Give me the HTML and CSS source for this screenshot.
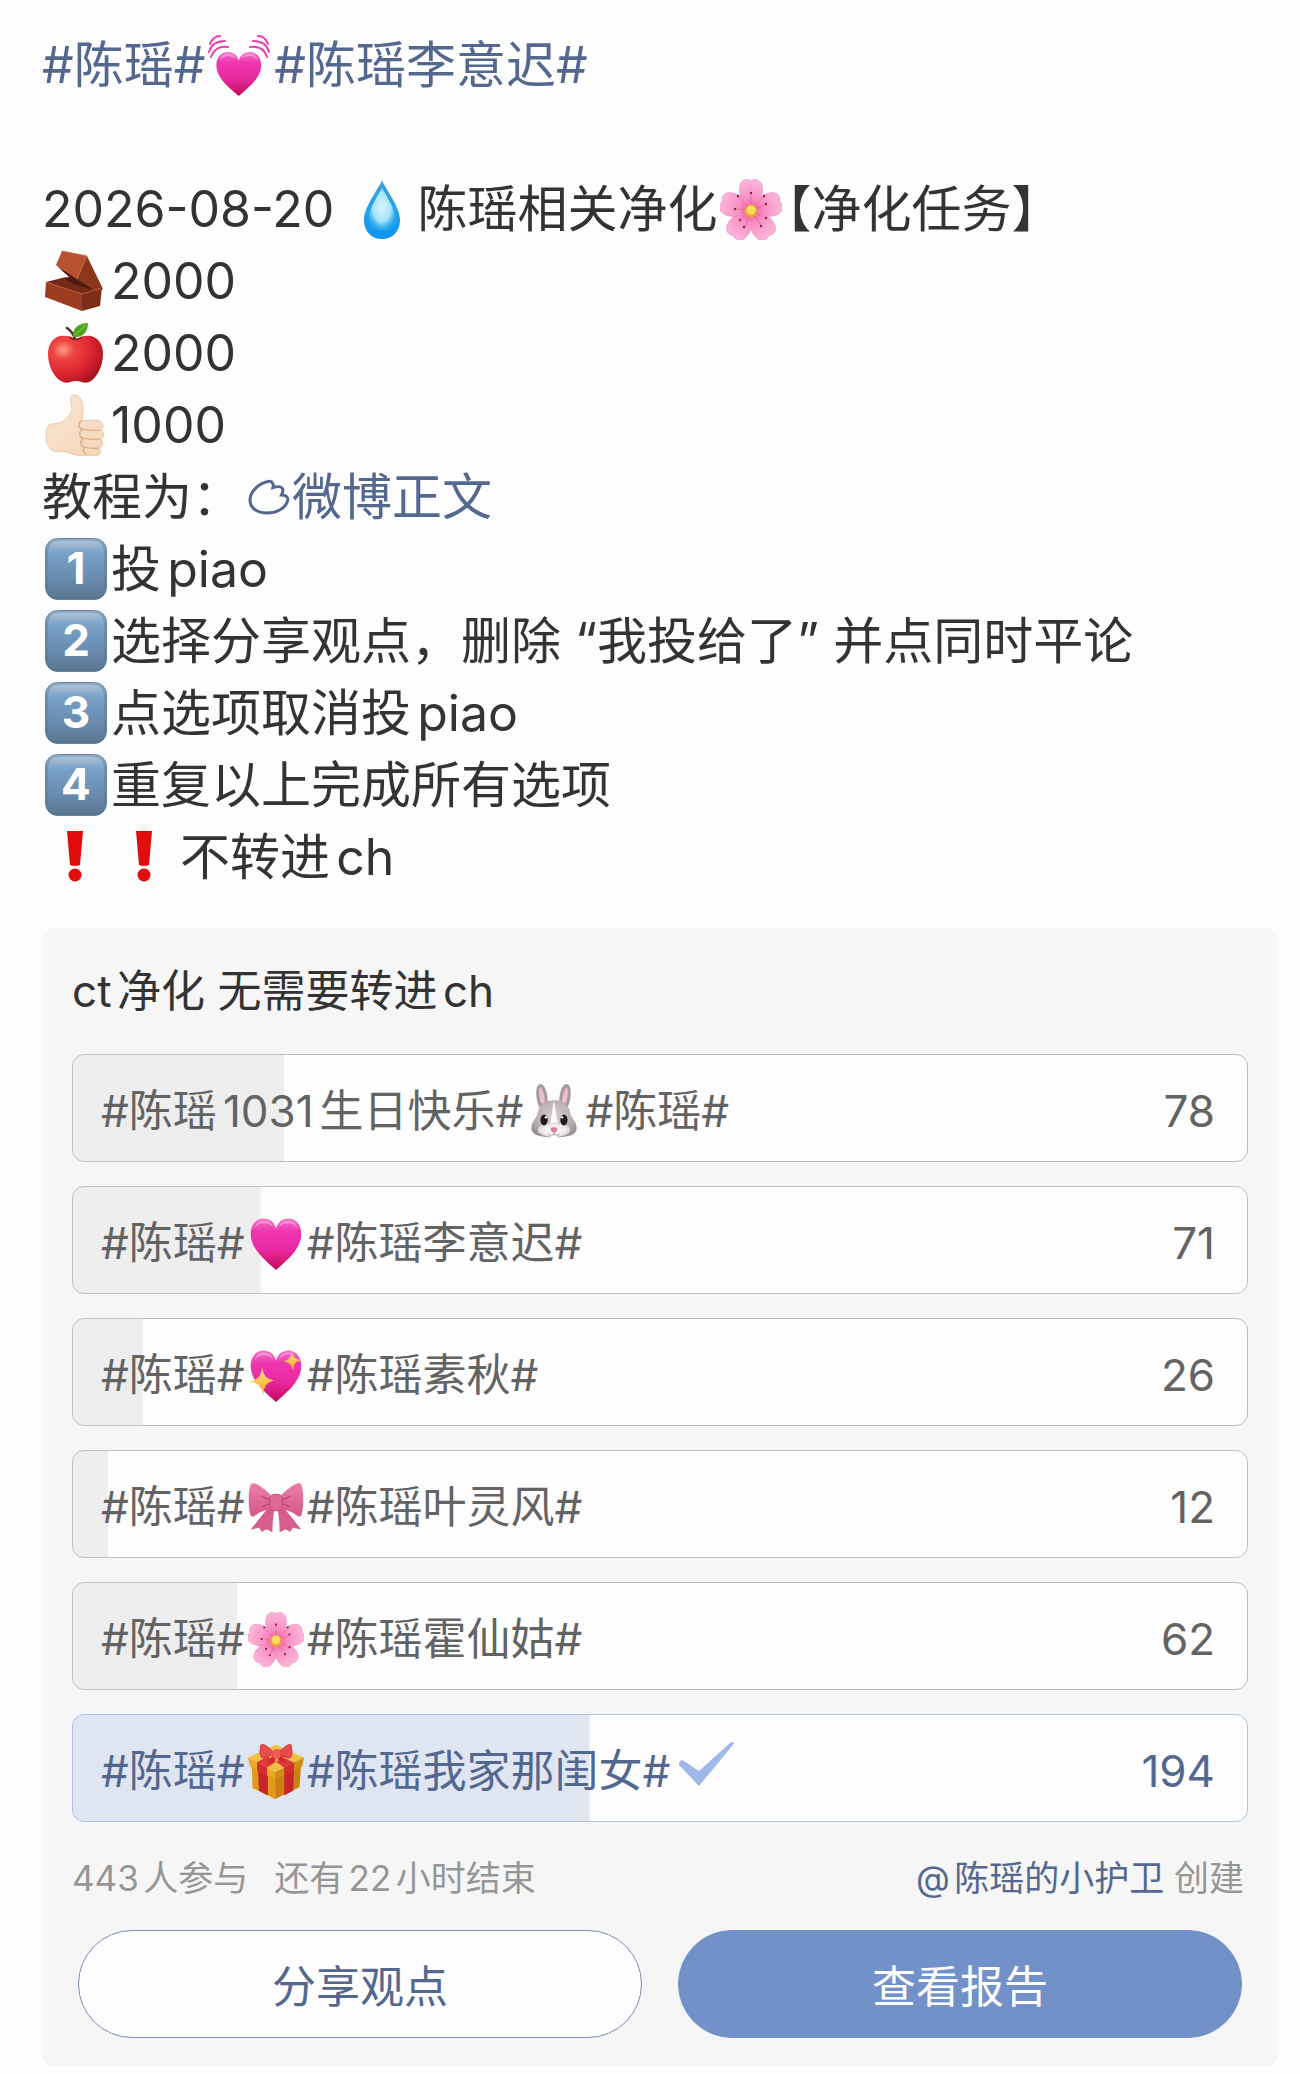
FILE: index.html
```html
<!DOCTYPE html>
<html lang="zh-CN">
<head>
<meta charset="UTF-8" />
<meta name="viewport" content="width=device-width, initial-scale=1" />
<title>微博投票</title>
<link rel="stylesheet" href="styles.css">
</head>
<body>

<!-- emoji -->
<svg class="sprite" width="0" height="0" aria-hidden="true">
  <defs>
    <linearGradient id="g-heart" x1="0" y1="0" x2="0" y2="1">
      <stop offset="0" stop-color="#f673c8" />
      <stop offset="0.25" stop-color="#ee35b0" />
      <stop offset="0.6" stop-color="#e92aa0" />
      <stop offset="1" stop-color="#c30a5c" />
    </linearGradient>
    <linearGradient id="g-drop" x1="0" y1="0" x2="0" y2="1">
      <stop offset="0" stop-color="#3f9fd0" />
      <stop offset="0.5" stop-color="#22a4ea" />
      <stop offset="1" stop-color="#0d93ee" />
    </linearGradient>
    <radialGradient id="g-shine" cx="0.5" cy="0.45" r="0.55">
      <stop offset="0" stop-color="#d8f6fe" />
      <stop offset="0.6" stop-color="#a6e4fb" />
      <stop offset="1" stop-color="#4fbdf3" stop-opacity="0.2" />
    </radialGradient>
    <radialGradient id="g-apple" cx="0.28" cy="0.3" r="0.8">
      <stop offset="0" stop-color="#ff9a88" />
      <stop offset="0.25" stop-color="#ee4440" />
      <stop offset="0.65" stop-color="#dd2430" />
      <stop offset="1" stop-color="#a3141f" />
    </radialGradient>
    <radialGradient id="g-petal" gradientUnits="userSpaceOnUse" cx="31" cy="33" r="32">
      <stop offset="0" stop-color="#ea4f90" />
      <stop offset="0.4" stop-color="#f88fc4" />
      <stop offset="1" stop-color="#fdb8dc" />
    </radialGradient>
    <linearGradient id="g-key" x1="0" y1="0" x2="0" y2="1">
      <stop offset="0" stop-color="#b4cadf" />
      <stop offset="0.25" stop-color="#789fc6" />
      <stop offset="0.6" stop-color="#6b8fb3" />
      <stop offset="1" stop-color="#5a7590" />
    </linearGradient>
    <linearGradient id="g-skin" x1="0" y1="0" x2="1" y2="1">
      <stop offset="0" stop-color="#fbe6d3" />
      <stop offset="1" stop-color="#f4d5b8" />
    </linearGradient>
    <radialGradient id="g-fur" cx="0.5" cy="0.45" r="0.6">
      <stop offset="0" stop-color="#d9cfd3" />
      <stop offset="0.7" stop-color="#b9aeb3" />
      <stop offset="1" stop-color="#978c92" />
    </radialGradient>
    <radialGradient id="g-muzzle" cx="0.5" cy="0.5" r="0.6">
      <stop offset="0" stop-color="#fff" />
      <stop offset="0.6" stop-color="#efe9ec" />
      <stop offset="1" stop-color="#c9bfc4" />
    </radialGradient>
    <linearGradient id="g-bow" x1="0" y1="0" x2="0" y2="1">
      <stop offset="0" stop-color="#ea7fa8" />
      <stop offset="1" stop-color="#d4578a" />
    </linearGradient>
    <linearGradient id="g-star" x1="0" y1="0" x2="0" y2="1">
      <stop offset="0" stop-color="#ffe37a" />
      <stop offset="1" stop-color="#f8a82c" />
    </linearGradient>
  </defs>

  <symbol id="heart" viewBox="0 0 62 62">
    <path fill="url(#g-heart)" d="M31 61C20 51 3 38 3 21 3 11 9 4 17 4c7 0 12 4 14 11C33 8 38 4 45 4c8 0 14 7 14 17 0 17-17 30-28 40z" />
    <path fill="#fbb3e2" opacity="0.6" d="M7 15C9 9 12 6 17 6s9 2 11 7c-4-3-7-4-11-4s-7 2-10 6zM34 13c2-5 6-7 11-7s8 3 10 9c-3-4-6-6-10-6s-7 1-11 4z" />
  </symbol>

  <symbol id="beating" viewBox="0 0 62 62">
    <g transform="translate(6 15) scale(0.8 0.77)">
      <path fill="url(#g-heart)" d="M31 61C20 51 3 38 3 21 3 11 9 4 17 4c7 0 12 4 14 11C33 8 38 4 45 4c8 0 14 7 14 17 0 17-17 30-28 40z" />
      <path fill="#fbb3e2" opacity="0.6" d="M7 15C9 9 12 6 17 6s9 2 11 7c-4-3-7-4-11-4s-7 2-10 6zM34 13c2-5 6-7 11-7s8 3 10 9c-3-4-6-6-10-6s-7 1-11 4z" />
    </g>
    <g fill="none" stroke="#ee3cae" stroke-width="2" stroke-linecap="round">
      <path d="M2 10q3-8 10-8M1 18q3-11 16-11M3 23Q7 11 20 13" />
      <path d="M60 10q-3-8-10-8M61 18q-3-11-16-11M59 23Q55 11 42 13" />
    </g>
  </symbol>

  <symbol id="sparkling" viewBox="0 0 62 62">
    <path fill="url(#g-heart)" d="M31 61C20 51 3 38 3 21 3 11 9 4 17 4c7 0 12 4 14 11C33 8 38 4 45 4c8 0 14 7 14 17 0 17-17 30-28 40z" />
    <path fill="#fbb3e2" opacity="0.6" d="M7 15C9 9 12 6 17 6s9 2 11 7c-4-3-7-4-11-4s-7 2-10 6zM34 13c2-5 6-7 11-7 3 0 5 1 7 3-3-1-4-1-7-1-4 0-7 2-11 5z" />
    <path fill="url(#g-star)" d="M16 23c1 9 4 12 13 14-9 2-11 6-12 16-2-9-5-13-15-15 10-2 12-6 14-15z" />
    <path fill="url(#g-star)" d="M48 4c1 7 4 9 11 11-7 1-8 4-9 11-2-6-4-9-10-10 6-2 8-5 8-12z" />
  </symbol>

  <symbol id="drop" viewBox="0 0 62 62">
    <path fill="url(#g-drop)" d="M31 2c2 7 18 26 18 40 0 12-8 19-18 19s-18-7-18-19C13 28 29 9 31 2z" />
    <path fill="url(#g-shine)" d="M31 9c3 8 14 22 14 33 0 7-6 11-14 11s-14-4-14-11C17 31 28 17 31 9z" />
  </symbol>

  <symbol id="flower" viewBox="0 0 62 62">
    <g fill="url(#g-petal)" stroke="#ee8cbb" stroke-width="0.7">
      <path id="petal" d="M31 34C22 27 18 15 20 8c1-6 7-8 11-5 4-3 10-1 11 5 2 7-2 19-11 26z" />
      <use href="#petal" transform="rotate(72 31 33)" />
      <use href="#petal" transform="rotate(144 31 33)" />
      <use href="#petal" transform="rotate(216 31 33)" />
      <use href="#petal" transform="rotate(288 31 33)" />
    </g>
    <g stroke="#e0669a" stroke-width="0.7" fill="#8c1f4c">
      <path d="M31 32V16M31 32L18 19M31 32l13-13M31 32l-15-1M31 32l15-5M31 32L20 42M31 32l10 15M31 32l-6 17M31 32l15 9" />
      <g stroke="none">
        <circle cx="31" cy="15" r="1.2" /><circle cx="18" cy="18" r="1.2" />
        <circle cx="44" cy="18" r="1.2" /><circle cx="15" cy="31" r="1.2" />
        <circle cx="46" cy="26" r="1.2" /><circle cx="20" cy="42" r="1.2" />
        <circle cx="41" cy="48" r="1.2" /><circle cx="24" cy="49" r="1.2" />
        <circle cx="46" cy="40" r="1.2" />
      </g>
    </g>
    <circle cx="31" cy="33" r="6.5" fill="#f0a23c" />
    <circle cx="31" cy="32" r="4.5" fill="#fbdc62" />
  </symbol>

  <symbol id="brick" viewBox="0 0 62 62">
    <path fill="#742a16" d="M1 32l20-5 36 11-20 7z" />
    <path fill="#9a3d20" d="M1 32l36 12v17L0 47z" />
    <path fill="#7c2d18" d="M37 44l20-7-2 19-18 5z" />
    <path fill="#4f1b0f" d="M11 15l20 13 21 13-24-7-8-5 4-2z" />
    <path fill="#8c361c" d="M42 6l16 33-6 3-20-13z" />
    <path fill="#b8512f" d="M17 1l25 5-10 23-21-14z" />
    <path fill="none" stroke="#c46745" stroke-width="0.8" d="M1 32l36 12 19-6M17 1l25 5-10 23" />
  </symbol>

  <symbol id="apple" viewBox="0 0 62 62">
    <path fill="url(#g-apple)" d="M31 17c5-3 10-4 15-3 8 2 12 9 12 18 0 13-7 25-14 28-5 2-8-1-13-1s-8 3-13 1C10 57 3 45 3 32c0-9 4-16 12-18 5-1 11 0 16 3z" />
    <path fill="none" stroke="#8f1a1a" stroke-width="1.5" d="M24 15q7 5 13 0" />
    <path fill="none" stroke="#59312b" stroke-width="2.6" stroke-linecap="round" d="M22 6q6 4 8 11" />
    <path fill="#4fa51d" d="M28 15C27 6 34 1 43 1c0 8-4 15-15 14z" />
    <path fill="none" stroke="#86cd46" stroke-width="1" d="M30 13L41 3" />
  </symbol>

  <symbol id="thumb" viewBox="0 0 62 62">
    <path fill="url(#g-skin)" stroke="#e6c09c" stroke-width="0.8" d="M3 32c3-4 10-1 14-4 5-4 9-8 10-13 0-5-4-13 1-14 8-1 10 8 10 14 0 4-1 7-1 12l14-1c8 0 9 9 4 10 5 1 5 9 0 9 4 2 3 8-1 9 3 3 1 8-4 8-11 0-20 0-28-4-5-2-9 1-14-1C0 54 0 37 3 32z" />
    <g fill="none" stroke="#d9a980" stroke-width="1.2" stroke-linecap="round">
      <path d="M37 27c-4 1-4 7 0 8q8 2 18 1M37 36c-3 1-3 8 1 8q8 2 17 1M38 45c-3 1-3 7 1 8q7 2 15 1M39 54q-2 4 2 6" />
    </g>
  </symbol>

  <symbol id="bang" viewBox="0 0 62 62">
    <path fill="#e30c0c" d="M22 5h16l-3 34q-5 2-10 0z" />
    <circle cx="30" cy="49" r="6.5" fill="#e30c0c" />
  </symbol>

  <symbol id="rabbit" viewBox="0 0 62 62">
    <path fill="#a79ba1" d="M15 27C10 17 10 1 16 1s9 14 8 24zM46 27c5-10 5-26-1-26s-9 14-8 24z" />
    <path fill="#eebfc7" d="M17 23C14 15 14 5 16 5s5 9 5 17zM44 23c3-8 3-18 1-18s-5 9-5 17z" />
    <path fill="url(#g-fur)" d="M31 19c10 0 17 6 18 14 1 6 7 9 7 17 0 7-8 10-25 10S6 57 6 50c0-8 6-11 7-17 1-8 8-14 18-14z" />
    <path fill="#fbfafb" d="M31 20c2 7 2 18 5 27H26c3-9 3-20 5-27z" />
    <ellipse cx="31" cy="52" rx="18" ry="8" fill="url(#g-muzzle)" />
    <path fill="#fff" d="M27 57h8l-1 5h-6z" />
    <ellipse cx="20" cy="41" rx="4" ry="6" fill="#1f1a1c" />
    <ellipse cx="42" cy="41" rx="4" ry="6" fill="#1f1a1c" />
    <circle cx="22" cy="38" r="1.3" fill="#fff" />
    <circle cx="40" cy="38" r="1.3" fill="#fff" />
    <path fill="#d87d92" d="M27 50q4-2 8 0-1 5-4 5t-4-5z" />
    <path fill="none" stroke="#a6979c" stroke-width="1" d="M31 55v2q-3 2-6 0M31 57q3 2 6 0" />
  </symbol>

  <symbol id="bow" viewBox="0 0 62 62">
    <path fill="#d85d8f" d="M24 30L14 42 3 56l9-2 4 5c1-2 3-3 5-3l6 3c0-10 1-18 2-25zM38 30l10 12 11 14-9-2-4 5c-1-2-3-3-5-3l-6 3c0-10-1-18-2-25z" />
    <path fill="url(#g-bow)" d="M26 19C18 10 8 3 4 5 0 8 0 33 3 40c2 3 4 1 7-1 5-4 12-4 16-8zM36 19C44 10 54 3 58 5c4 3 4 28 1 35-2 3-4 1-7-1-5-4-12-4-16-8z" />
    <path fill="none" stroke="#bd3f74" stroke-width="1.2" d="M25 23q-6-1-10-4M25 28q-6 0-9 3M37 23q6-1 10-4M37 28q6 0 9 3" />
    <rect x="24" y="17" width="14" height="18" rx="5" fill="#df6796" stroke="#bf4577" />
  </symbol>

  <symbol id="gift" viewBox="0 0 62 62">
    <path fill="#e19a1d" d="M4 22l26 14v26L5 50z" />
    <path fill="#c9820f" d="M59 22L30 36v26l27-13z" />
    <path fill="#c9242a" d="M11 28l11 6v24l-10-5zM40 33l11-6-1 26-10 5z" />
    <path fill="#f3c043" d="M31 2l31 14-32 16L0 16z" />
    <path fill="#eba923" d="M0 16l30 16v8L2 26z" />
    <path fill="#d18d16" d="M62 16L30 32v8l30-14z" />
    <path fill="#d32c30" d="M10 21l11 6v9l-11-6zM40 27l11-5v8l-11 6z" />
    <path fill="#e03b3b" d="M10 21l28-14 9 4-26 16zM51 22L22 7l-6 4 24 16z" />
    <path fill="#ea4b4b" stroke="#b51f25" stroke-width="0.8" d="M29 12C24 4 15-1 14 3c-1 6-1 10 1 13 3 2 9-2 14-4zM34 12c5-8 13-13 14-9 1 6 1 10-1 13-3 2-8-2-13-4z" />
    <path fill="#d5282e" d="M28 12l-7 11 8-2 3-6 3 6 8 1-8-10z" />
    <rect x="27" y="7" width="9" height="10" rx="3" fill="#f05a57" />
  </symbol>

  <symbol id="key" viewBox="0 0 62 62">
    <rect x="0.500" y="0.500" width="61" height="61" rx="12" fill="url(#g-key)" stroke="#64829f" />
    <rect x="2" y="2" width="58" height="58" rx="11" fill="none" stroke="#55728e" stroke-opacity="0.35" stroke-width="2" />
  </symbol>
</svg>

<main class="post">
  <div class="post-text">
    <p class="tags"><a href="#">#陈瑶#<svg class="emoji" role="img" aria-label="💓"><use href="#beating" /></svg>#陈瑶李意迟#</a></p>
    <p><br></p>
    <p>2026-08-20 <svg class="emoji" role="img" aria-label="💧"><use href="#drop" /></svg>陈瑶相关净化<svg class="emoji" role="img" aria-label="🌸"><use href="#flower" /></svg><span class="half">【</span>净化任务<span class="half">】</span></p>
    <p><svg class="emoji" role="img" aria-label="🧱"><use href="#brick" /></svg>2000</p>
    <p><svg class="emoji" role="img" aria-label="🍎"><use href="#apple" /></svg>2000</p>
    <p><svg class="emoji" role="img" aria-label="👍🏻"><use href="#thumb" /></svg>1000</p>
    <p>教程为：<a href="#"><svg class="weibo-icon" viewBox="0 0 42 36" aria-hidden="true"><path d="M20 2.500C24 1.500 26 5 25 8.500c3-1 8-1.500 9.500 1 1 2 0 4.500-1 6.500 5 0 7 2.500 6 6C37 30 28 34 19 34 9 34 2 29 2 21 2 12 12 4 20 2.500z" /></svg>微博正文</a></p>
    <p><svg class="emoji" viewBox="0 0 62 62"><use href="#key" /><text class="key-num" x="31" y="46">1</text></svg>投piao</p>
    <p><svg class="emoji" viewBox="0 0 62 62"><use href="#key" /><text class="key-num" x="31" y="46">2</text></svg>选择分享观点，删除 “我投给了” 并点同时平论</p>
    <p><svg class="emoji" viewBox="0 0 62 62"><use href="#key" /><text class="key-num" x="31" y="46">3</text></svg>点选项取消投piao</p>
    <p><svg class="emoji" viewBox="0 0 62 62"><use href="#key" /><text class="key-num" x="31" y="46">4</text></svg>重复以上完成所有选项</p>
    <p><svg class="emoji" role="img" aria-label="❗"><use href="#bang" /></svg><svg class="emoji" role="img" aria-label="❗"><use href="#bang" /></svg>不转进ch</p>
  </div>

  <section class="poll">
    <h2>ct净化 无需要转进ch</h2>

    <div class="options">
      <button type="button" class="option" style="--share: 18%">
        <span class="tags">#陈瑶<span class="num">1031</span>生日快乐#<svg class="emoji" role="img" aria-label="🐰"><use href="#rabbit" /></svg>#陈瑶#</span>
        <span class="votes">78</span>
      </button>
      <button type="button" class="option" style="--share: 16%">
        <span class="tags">#陈瑶#<svg class="emoji" role="img" aria-label="🩷"><use href="#heart" /></svg>#陈瑶李意迟#</span>
        <span class="votes">71</span>
      </button>
      <button type="button" class="option" style="--share: 6%">
        <span class="tags">#陈瑶#<svg class="emoji" role="img" aria-label="💖"><use href="#sparkling" /></svg>#陈瑶素秋#</span>
        <span class="votes">26</span>
      </button>
      <button type="button" class="option" style="--share: 3%">
        <span class="tags">#陈瑶#<svg class="emoji" role="img" aria-label="🎀"><use href="#bow" /></svg>#陈瑶叶灵风#</span>
        <span class="votes">12</span>
      </button>
      <button type="button" class="option" style="--share: 14%">
        <span class="tags">#陈瑶#<svg class="emoji" role="img" aria-label="🌸"><use href="#flower" /></svg>#陈瑶霍仙姑#</span>
        <span class="votes">62</span>
      </button>
      <button type="button" class="option selected" style="--share: 44%">
        <span class="tags">#陈瑶#<svg class="emoji" role="img" aria-label="🎁"><use href="#gift" /></svg>#陈瑶我家那闺女#<svg class="check" viewBox="0 0 56 46" aria-hidden="true"><path d="M1 22q1-4 5-2l15 10L52 2q3-2 4 0-1 2-2 3L21 45 1 24z" /></svg></span>
        <span class="votes">194</span>
      </button>
    </div>

    <div class="meta">
      <div class="stats"><span>443人参与</span><span>还有22小时结束</span></div>
      <div><a href="#">@陈瑶的小护卫</a> 创建</div>
    </div>

    <div class="actions">
      <button type="button" class="btn">分享观点</button>
      <button type="button" class="btn primary">查看报告</button>
    </div>
  </section>
</main>

</body>
</html>
```
FILE: styles.css
```css
* {
  box-sizing: border-box;
}
body {
  margin: 0;
  background: #fdfdfd;
  color: #333;
  font-family: Inter, "Noto Sans CJK SC", sans-serif;
  text-autospace: normal;
}
a {
  color: #54688f;
  text-decoration: none;
}
button {
  font-family: inherit;
  cursor: pointer;
}
.sprite {
  position: absolute;
}
.post {
  padding: 29px 22px 8px 42px;
}

/* Texto */
.post-text {
  font-size: 50px;
  line-height: 72px;
}
.post-text p {
  margin: 0;
}
.emoji {
  width: 62px;
  height: 62px;
  margin: 0 4px 0 3px;
  vertical-align: -13px;
}
.key-num {
  fill: #fff;
  font-size: 44px;
  font-weight: 700;
  text-anchor: middle;
}
.half {
  font-feature-settings: "halt";
}
.tags {
  text-autospace: no-autospace;
}
.num {
  margin: 0 6px;
}
.weibo-icon {
  width: 42px;
  height: 36px;
  margin: 0 2px 0 6px;
  fill: none;
  stroke: #54688f;
  stroke-width: 3;
}

/* 投票 */
.poll {
  margin-top: 35px;
  padding: 33px 30px 28px;
  background: #f6f6f6;
  border-radius: 12px;
}
.poll h2 {
  margin: 0 0 33px;
  font-size: 44px;
  font-weight: 400;
  line-height: 60px;
}
.options {
  display: flex;
  flex-direction: column;
  gap: 24px;
}
.option {
  display: flex;
  justify-content: space-between;
  align-items: center;
  height: 108px;
  padding: 6px 32px 0 28px;
  border: 1px solid #bfbfbf;
  border-radius: 12px;
  background: linear-gradient(#eee, #eee) 0 0 / var(--share) 100% no-repeat #fdfdfd;
  color: #636363;
  font-size: 44px;
  line-height: 60px;
  text-align: left;
}
.option .emoji {
  width: 56px;
  height: 56px;
  margin: 0 3px;
  vertical-align: -12px;
}
.option.selected {
  border-color: #b0c3e3;
  background-image: linear-gradient(#dfe6f2, #dfe6f2);
  color: #54688f;
}
.check {
  width: 56px;
  height: 46px;
  margin-left: 8px;
  fill: #9fb8e8;
}
.meta {
  display: flex;
  justify-content: space-between;
  margin: 32px 4px 28px 0;
  color: #969696;
  font-size: 35px;
  line-height: 48px;
}
.stats {
  display: flex;
  gap: 26px;
}
.actions {
  display: flex;
  gap: 36px;
  padding: 0 6px;
}
.btn {
  flex: 1;
  height: 108px;
  border: 1px solid #7a8db5;
  border-radius: 54px;
  background: #fdfdfd;
  color: #54688f;
  font-size: 44px;
}
.btn.primary {
  border-color: #7191c8;
  background: #7191c8;
  color: #fdfdfd;
}
```
